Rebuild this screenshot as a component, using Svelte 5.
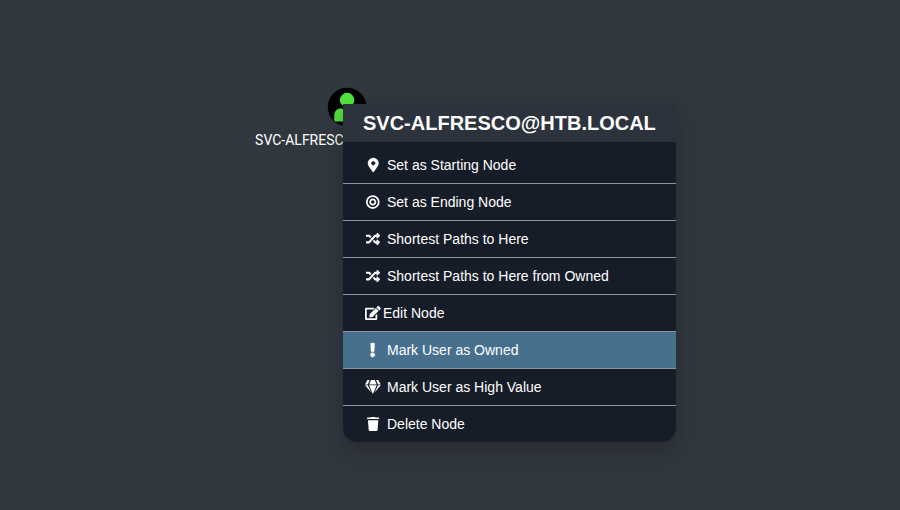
<script>
  const shuffle = {
    width: 512,
    path: 'M504.971 359.029c9.373 9.373 9.373 24.569 0 33.941l-80 79.984c-15.01 15.01-40.971 4.49-40.971-16.971V416h-58.785a12.004 12.004 0 0 1-8.773-3.812l-70.556-75.596 53.333-57.143L352 336h32v-39.981c0-21.438 25.943-31.998 40.971-16.971l80 79.981zM12 176h84l52.781 56.551 53.333-57.143-70.556-75.596A11.999 11.999 0 0 0 122.785 96H12c-6.627 0-12 5.373-12 12v56c0 6.627 5.373 12 12 12zm372 0v39.984c0 21.46 25.961 31.98 40.971 16.971l80-79.984c9.373-9.373 9.373-24.569 0-33.941l-80-79.981C409.943 24.021 384 34.582 384 56.019V96h-58.785a12.004 12.004 0 0 0-8.773 3.812L96 336H12c-6.627 0-12 5.373-12 12v56c0 6.627 5.373 12 12 12h110.785c3.326 0 6.503-1.381 8.773-3.812L352 176h32z'
  };

  const items = [
    {
      label: 'Set as Starting Node',
      icon: {
        width: 384,
        bold: true,
        path: 'M172.268 501.67C26.97 291.031 0 269.413 0 192 0 85.961 85.961 0 192 0s192 85.961 192 192c0 77.413-26.97 99.031-172.268 309.67-9.535 13.774-29.93 13.773-39.464 0zM192 272c44.183 0 80-35.817 80-80s-35.817-80-80-80-80 35.817-80 80 35.817 80 80 80z'
      }
    },
    {
      label: 'Set as Ending Node',
      icon: {
        width: 496,
        path: 'M248 8C111.03 8 0 119.03 0 256s111.03 248 248 248 248-111.03 248-248S384.97 8 248 8zm0 432c-101.69 0-184-82.29-184-184 0-101.69 82.29-184 184-184 101.69 0 184 82.29 184 184 0 101.69-82.29 184-184 184zm0-312c-70.69 0-128 57.31-128 128s57.31 128 128 128 128-57.31 128-128-57.31-128-128-128zm0 192c-35.29 0-64-28.71-64-64s28.71-64 64-64 64 28.71 64 64-28.71 64-64 64z'
      }
    },
    { label: 'Shortest Paths to Here', icon: shuffle },
    { label: 'Shortest Paths to Here from Owned', icon: shuffle },
    {
      label: 'Edit Node',
      tight: true,
      icon: {
        width: 576,
        path: 'M402.6 83.2l90.2 90.2c3.8 3.8 3.8 10 0 13.8L274.4 405.6l-92.8 10.3c-12.4 1.4-22.9-9.1-21.5-21.5l10.3-92.8L388.8 83.2c3.8-3.8 10-3.8 13.8 0zm162-22.9l-48.8-48.8c-15.2-15.2-39.9-15.2-55.2 0l-35.4 35.4c-3.8 3.8-3.8 10 0 13.8l90.2 90.2c3.8 3.8 10 3.8 13.8 0l35.4-35.4c15.2-15.3 15.2-40 0-55.2zM384 346.2V448H64V128h229.8c3.2 0 6.2-1.3 8.5-3.5l40-40c7.6-7.6 2.2-20.5-8.5-20.5H48C21.5 64 0 85.5 0 112v352c0 26.5 21.5 48 48 48h352c26.5 0 48-21.5 48-48V306.2c0-10.7-12.9-16-20.5-8.5l-40 40c-2.2 2.3-3.5 5.3-3.5 8.5z'
      }
    },
    {
      label: 'Mark User as Owned',
      icon: {
        width: 192,
        bold: true,
        path: 'M176 432c0 44.112-35.888 80-80 80s-80-35.888-80-80 35.888-80 80-80 80 35.888 80 80zM25.26 25.199l13.6 272C39.499 309.972 50.041 320 62.83 320h66.34c12.789 0 23.331-10.028 23.97-22.801l13.6-272C167.425 11.49 156.496 0 142.77 0H49.23C35.504 0 24.575 11.49 25.26 25.199z'
      }
    },
    {
      label: 'Mark User as High Value',
      icon: {
        width: 576,
        path: 'M485.5 0L576 160H474.9L405.7 0h79.8zm-128 0l69.2 160H149.3L218.5 0h139zm-267 0h79.8l-69.2 160H0L90.5 0zM0 192h100.7l123 251.7c1.5 3.1-2.7 5.9-5 3.3L0 192zm148.2 0h279.6l-137 318.2c-1 2.4-4.5 2.4-5.5 0L148.2 192zm204.1 251.7l123-251.7H576L357.3 446.9c-2.3 2.7-6.5-.1-5-3.2z'
      }
    },
    {
      label: 'Delete Node',
      icon: {
        width: 448,
        path: 'M432 20H312l-9-12A24 24 0 0 0 281 0H167a24 24 0 0 0-21 8L136 20H16A16 16 0 0 0 0 36v22a16 16 0 0 0 16 16h416a16 16 0 0 0 16-16V36a16 16 0 0 0-16-16zM62 474a42 42 0 0 0 42 38h240a42 42 0 0 0 42-38L414 122H34z'
      }
    }
  ];

  let active = $state(5);
</script>

<main class="graph">
  <div class="node">
    <svg class="avatar" viewBox="0 0 40 40" aria-hidden="true">
      <circle cx="20" cy="20" r="19.3" fill="#000" />
      <circle cx="20" cy="13" r="7.2" fill="#50e43b" />
      <path
        d="M7.2 33v-4.3c0-4.600 3-7.100 6.600-7.100 1.600 0 3 1.500 6.200 1.500s4.600-1.500 6.200-1.500c3.600 0 6.600 2.500 6.600 7.100V33c0 .8-.7 1.500-1.500 1.500H8.700c-.8 0-1.500-.7-1.500-1.500z"
        fill="#50e43b"
      />
    </svg>
    <span class="node-label">SVC-ALFRESCO@HTB.LOCAL</span>
  </div>

  <section class="menu" aria-labelledby="menu-title">
    <h1 id="menu-title">SVC-ALFRESCO@HTB.LOCAL</h1>
    <ul>
      {#each items as item, i}
        <li>
          <button
            type="button"
            class:active={active === i}
            class:tight={item.tight}
            onmouseenter={() => (active = i)}
          >
            <span class="icon" class:bold={item.icon.bold}>
              <svg viewBox="0 0 {item.icon.width} 512" aria-hidden="true">
                <path d={item.icon.path} fill="currentColor" />
              </svg>
            </span>
            {item.label}
          </button>
        </li>
      {/each}
    </ul>
  </section>
</main>

<style>
  :global(body) {
    margin: 0;
    background: #30373e;
  }

  .graph {
    position: relative;
    min-height: 100vh;
    overflow: hidden;
    background: #30373e;
    font-family: 'Liberation Sans', Arial, sans-serif;
    color: #fff;
  }

  .node {
    position: absolute;
    left: 347px;
    top: 87px;
    display: flex;
    flex-direction: column;
    align-items: center;
    gap: 5px;
    transform: translateX(-50%);
  }

  .avatar {
    width: 40px;
    height: 40px;
  }

  .node-label {
    font: 14px/16px Roboto, sans-serif;
  }

  .menu {
    position: absolute;
    left: 343px;
    top: 104px;
    border-radius: 0 0 14px 14px;
    background: #171d28;
    box-shadow: 0 10px 18px rgba(32, 30, 36, 0.4);
  }

  h1 {
    margin: 0;
    padding: 0 20px;
    background: #2d333d;
    font-size: 20px;
    line-height: 38px;
    font-weight: bold;
    white-space: nowrap;
  }

  ul {
    margin: 0;
    padding: 5px 0 0;
    list-style: none;
  }

  li + li {
    border-top: 1px solid #8e949b;
  }

  button {
    display: flex;
    align-items: center;
    gap: 5px;
    width: 100%;
    height: 36px;
    padding: 0 21px;
    border: 0;
    background: none;
    color: inherit;
    font: inherit;
    font-size: 14px;
    text-align: left;
    white-space: nowrap;
    cursor: pointer;
  }

  li:last-child button {
    border-radius: 0 0 14px 14px;
  }

  button.active {
    background: #47708f;
  }

  button.tight {
    gap: 1px;
  }

  .icon {
    display: flex;
    justify-content: center;
    width: 18px;
  }

  .icon svg {
    height: 14px;
    overflow: visible;
  }

  .bold path {
    stroke: currentColor;
    stroke-width: 14;
  }
</style>
